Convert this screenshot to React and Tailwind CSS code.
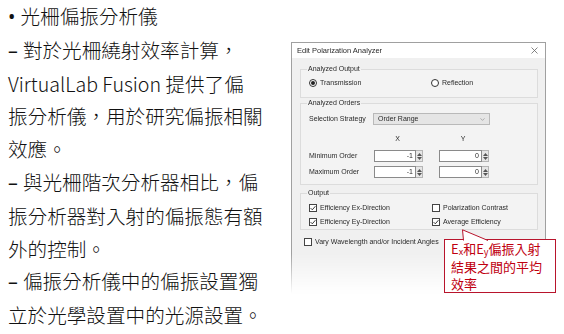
import { ChevronDown } from 'lucide-react';

const lines = [
    ['•', '光柵偏振分析儀'],
    ['–', '對於光柵繞射效率計算，'],
    ['', 'VirtualLab Fusion 提供了偏'],
    ['', '振分析儀，用於研究偏振相關'],
    ['', '效應。'],
    ['–', '與光柵階次分析器相比，偏'],
    ['', '振分析器對入射的偏振態有額'],
    ['', '外的控制。'],
    ['–', '偏振分析儀中的偏振設置獨'],
    ['', '立於光學設置中的光源設置。'],
];

function Radio({ checked, label }) {
    return (
        <div className="flex items-center gap-[3px]">
            <span className="w-[8px] h-[8px] rounded-full border border-[#333] bg-white flex items-center justify-center">
                {checked && <span className="w-[4px] h-[4px] rounded-full bg-[#222]" />}
            </span>
            <span>{label}</span>
        </div>
    );
}

function Check({ checked, label }) {
    return (
        <div className="flex items-center gap-[3px]">
            <span className="w-[8px] h-[8px] border border-[#444] bg-white flex items-center justify-center">
                {checked && (
                    <svg width="6" height="6" viewBox="0 0 6 6">
                        <path d="M0.6 3.1 L2.3 4.8 L5.4 1.2" fill="none" stroke="#222" strokeWidth="0.9" />
                    </svg>
                )}
            </span>
            <span>{label}</span>
        </div>
    );
}

function Spin({ value, width }) {
    return (
        <div className="flex h-[12px]">
            <div className={`${width} h-full bg-white border border-[#8a8a8a] flex items-center justify-end pr-[2px]`}>
                {value}
            </div>
            <div className="w-[7px] h-full bg-[#e6e6e6] border-y border-r border-[#b5b5b5] flex flex-col items-center justify-center gap-[1px]">
                <svg width="5" height="3" viewBox="0 0 5 3"><path d="M0 3 L2.5 0 L5 3 Z" fill="#555" /></svg>
                <svg width="5" height="3" viewBox="0 0 5 3"><path d="M0 0 L2.5 3 L5 0 Z" fill="#555" /></svg>
            </div>
        </div>
    );
}

function Dialog() {
    return (
        <div className="w-[255px] h-[252px] mt-[42px] border border-[#a0a0a0] bg-[#f0f0f0] flex flex-col text-[7px] leading-[10px] text-[#2a2a2a] [font-family:'Liberation_Sans',Arial,sans-serif] [mask-image:linear-gradient(to_bottom,black_84%,transparent_100%)]">
            <div className="h-[15px] bg-white flex items-center justify-between pl-[5px] pr-[7px] text-[7.5px]">
                <span>Edit Polarization Analyzer</span>
                <svg width="7" height="7" viewBox="0 0 7 7"><path d="M0.5 0.5 L6.5 6.5 M6.5 0.5 L0.5 6.5" stroke="#666" strokeWidth="0.8" /></svg>
            </div>

            <div className="pl-[8px] pr-[7px] flex flex-col">
                <fieldset className="mt-[6px] border border-[#dcdcdc] bg-[#f3f3f3] px-[8px] pb-[9px]">
                    <legend className="ml-[-2px] px-[1px]">Analyzed Output</legend>
                    <div className="mt-[4px] h-[10px] flex">
                        <div className="w-[122px]"><Radio checked label="Transmission" /></div>
                        <Radio label="Reflection" />
                    </div>
                </fieldset>

                <fieldset className="border border-[#dcdcdc] bg-[#f3f3f3] px-[8px] pb-[6px]">
                    <legend className="ml-[-2px] px-[1px]">Analyzed Orders</legend>
                    <div className="mt-[5px] h-[12px] flex items-center">
                        <span className="w-[64px]">Selection Strategy</span>
                        <div className="w-[117px] h-[12px] bg-[#e5e5e5] border border-[#b9b9b9] flex items-center justify-between pl-[4px] pr-[3px]">
                            <span>Order Range</span>
                            <ChevronDown size={7} strokeWidth={1.5} color="#666" />
                        </div>
                    </div>
                    <div className="mt-[9px] h-[10px] flex pl-[64px]">
                        <span className="w-[49px] text-center">X</span>
                        <span className="w-[16px]" />
                        <span className="w-[50px] text-center">Y</span>
                    </div>
                    <div className="mt-[6px] flex items-center">
                        <span className="w-[65px]">Minimum Order</span>
                        <Spin value="-1" width="w-[42px]" />
                        <span className="w-[16px]" />
                        <Spin value="0" width="w-[43px]" />
                    </div>
                    <div className="mt-[4px] flex items-center">
                        <span className="w-[65px]">Maximum Order</span>
                        <Spin value="-1" width="w-[42px]" />
                        <span className="w-[16px]" />
                        <Spin value="0" width="w-[43px]" />
                    </div>
                </fieldset>

                <fieldset className="mt-[3px] border border-[#dcdcdc] bg-[#f3f3f3] px-[8px] pb-[2px]">
                    <legend className="ml-[-2px] px-[1px]">Output</legend>
                    <div className="mt-[5px] h-[10px] flex">
                        <div className="w-[123px]"><Check checked label="Efficiency Ex-Direction" /></div>
                        <Check label="Polarization Contrast" />
                    </div>
                    <div className="mt-[4px] h-[10px] flex">
                        <div className="w-[123px]"><Check checked label="Efficiency Ey-Direction" /></div>
                        <Check checked label="Average Efficiency" />
                    </div>
                </fieldset>

                <div className="mt-[7px] h-[10px] pl-[4px]">
                    <Check label="Vary Wavelength and/or Incident Angles" />
                </div>
            </div>
        </div>
    );
}

export default function App() {
    return (
        <div className="relative w-[564px] h-[334px] bg-white overflow-hidden flex">
            <div className="w-[291px] pl-[8px] text-[19.6px] leading-[32.8px] font-light text-[#111] [font-family:'Noto_Sans_CJK_TC','Noto_Sans',sans-serif]">
                {lines.map(([mark, text], i) => (
                    <div key={i} className="whitespace-nowrap">
                        {mark && <span className="[font-family:'Noto_Sans',sans-serif] font-normal">{mark} </span>}
                        {text}
                    </div>
                ))}
            </div>
            <Dialog />

            <div className="absolute left-[444px] top-[239px] w-[112px] h-[54px] border border-[#b8142c] bg-white pl-[6px] text-[13px] leading-[17.5px] text-[#c00010] [font-family:'Noto_Sans_CJK_TC','Noto_Sans',sans-serif]">
                <svg className="absolute left-[17px] top-[-11px]" width="28" height="12" viewBox="0 0 28 12">
                    <path d="M1.5 11.5 L0.5 0.8 L26 11.5 Z" fill="white" />
                    <path d="M1.5 11.5 L0.5 0.8 L26 11.5" fill="none" stroke="#b8142c" strokeWidth="1" />
                </svg>
                <div className="h-[17.5px] whitespace-nowrap">E<span className="relative top-[1px] text-[9px] leading-none">x</span>和E<span className="relative top-[1px] text-[9px] leading-none">y</span>偏振入射</div>
                <div className="h-[17.5px] whitespace-nowrap">結果之間的平均</div>
                <div className="h-[17.5px] whitespace-nowrap">效率</div>
            </div>
        </div>
    );
}
